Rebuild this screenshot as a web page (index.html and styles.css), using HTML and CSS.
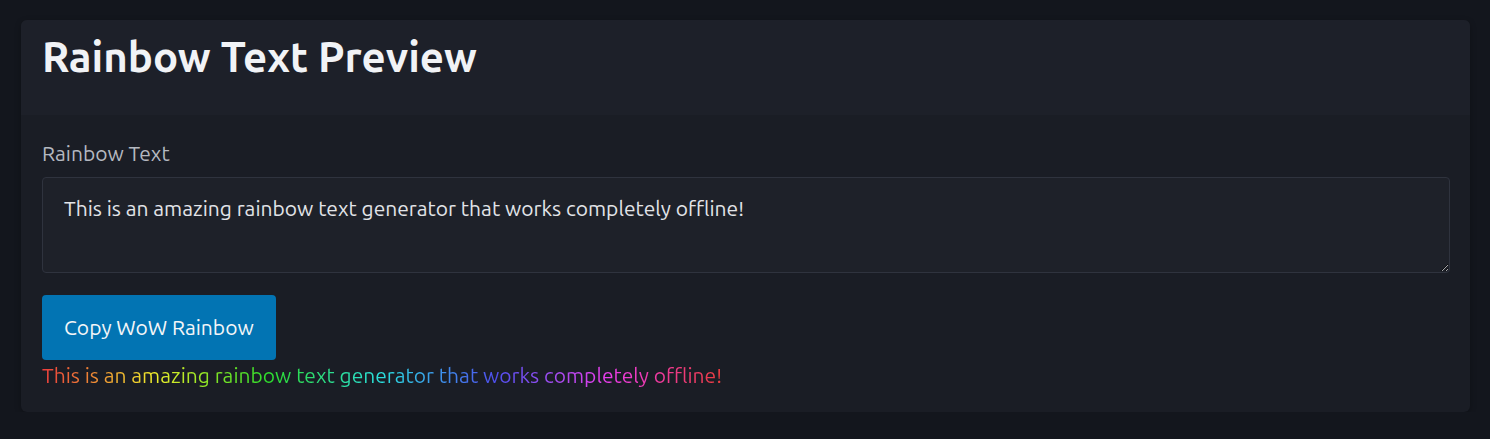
FILE: index.html
```html
<!DOCTYPE html>
<html lang="en">
<head>
<meta charset="utf-8">
<title>Rainbow Text Preview</title>
<link rel="stylesheet" href="styles.css">
</head>
<body>
  <div class="card">
    <div class="card-header">
      <h1 class="title">Rainbow Text Preview</h1>
    </div>
    <div class="card-body">
      <label class="label" for="rt">Rainbow Text</label>
      <textarea id="rt" class="input">This is an amazing rainbow text generator that works completely offline!</textarea>
      <button class="btn" type="button">Copy WoW Rainbow</button>
      <div class="preview"><span class="rainbow">This is an amazing rainbow text generator that works completely offline!</span></div>
    </div>
  </div>
</body>
</html>
```

FILE: styles.css
```css
html, body {
  margin: 0;
  padding: 0;
}
body {
  background: #13161d;
  font-family: "Ubuntu", "Open Sans", "Noto Sans", sans-serif;
  font-size: 21px;
  line-height: 1.5;
  color: #e2e4e8;
  padding: 20px 20px 0 21px;
}
.card {
  background: #1a1d25;
  border-radius: 6px;
  box-shadow: 0 2px 6px rgba(0,0,0,0.25);
  overflow: hidden;
}
.card-header {
  background: #1d2029;
  height: 95px;
  padding: 0 21px;
  box-sizing: border-box;
}
.title {
  margin: 0;
  padding-top: 12px;
  font-size: 42px;
  font-weight: 700;
  line-height: 1.2;
  color: #f1f3f6;
}
.card-body {
  padding: 23px 20px 21px 21px;
  display: flex;
  flex-direction: column;
  align-items: flex-start;
}
.label {
  color: #b4b8c0;
  margin-bottom: 7.5px;
}
.input {
  box-sizing: border-box;
  width: 100%;
  height: 96px;
  background: #1e2129;
  border: 1px solid #2f333e;
  border-radius: 4px;
  color: #e2e4e8;
  font: inherit;
  padding: 15px 21px;
  margin: 0 0 22px 0;
  resize: vertical;
  outline: none;
}
.btn {
  font: inherit;
  color: #f4f6f8;
  background: #0274b3;
  border: none;
  border-radius: 4px;
  padding: 16.5px 22px;
  cursor: pointer;
}
.preview {
  line-height: 31.5px;
}
.rainbow {
  display: inline-block;
  background-image: linear-gradient(to right,
    hsl(0, 82%, 58%) 0%,
    hsl(30, 85%, 57%) 8.33%,
    hsl(60, 85%, 55%) 16.67%,
    hsl(90, 78%, 52%) 25%,
    hsl(120, 72%, 52%) 33.33%,
    hsl(150, 72%, 52%) 41.67%,
    hsl(180, 74%, 52%) 50%,
    hsl(210, 82%, 58%) 58.33%,
    hsl(240, 82%, 62%) 66.67%,
    hsl(270, 84%, 62%) 75%,
    hsl(300, 82%, 58%) 83.33%,
    hsl(330, 84%, 58%) 91.67%,
    hsl(360, 82%, 58%) 100%);
  -webkit-background-clip: text;
  background-clip: text;
  color: transparent;
}
```
